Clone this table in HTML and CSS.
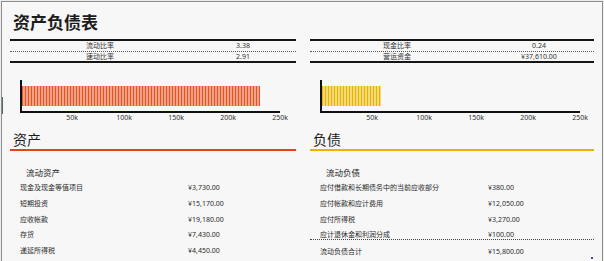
FILE: index.html
```html
<!DOCTYPE html>
<html lang="zh">
<head>
<meta charset="utf-8">
<title>资产负债表</title>
<link rel="stylesheet" href="styles.css">
</head>
<body>
<div class="sheet">
  <h1 class="title">资产负债表</h1>
  <div class="cols">
    <section class="col col-left">
      <div class="ratios ratios-left">
        <div class="ratio-row"><span>流动比率</span><span>3.38</span></div>
        <div class="ratio-row"><span>速动比率</span><span>2.91</span></div>
      </div>
      <div class="chart">
        <div class="plot"><div class="bar bar-assets" style="width:238px"></div></div>
        <div class="ticks"><span>50k</span><span>100k</span><span>150k</span><span>200k</span><span>250k</span></div>
      </div>
      <h2 class="section section-assets">资产</h2>
      <h3 class="group">流动资产</h3>
      <div class="rows">
        <div class="row"><span>现金及现金等值项目</span><span>¥3,730.00</span></div>
        <div class="row"><span>短期投资</span><span>¥15,170.00</span></div>
        <div class="row"><span>应收帐款</span><span>¥19,180.00</span></div>
        <div class="row"><span>存货</span><span>¥7,430.00</span></div>
        <div class="row"><span>递延所得税</span><span>¥4,450.00</span></div>
        <div class="row"><span>预付费用和其他流动资产</span><span>¥3,840.00</span></div>
      </div>
    </section>
    <section class="col col-right">
      <div class="ratios ratios-right">
        <div class="ratio-row"><span>现金比率</span><span>0.24</span></div>
        <div class="ratio-row"><span>营运资金</span><span>¥37,610.00</span></div>
      </div>
      <div class="chart">
        <div class="plot"><div class="bar bar-liab" style="width:59px"></div></div>
        <div class="ticks"><span>50k</span><span>100k</span><span>150k</span><span>200k</span><span>250k</span></div>
      </div>
      <h2 class="section section-liab">负债</h2>
      <h3 class="group">流动负债</h3>
      <div class="rows">
        <div class="row"><span>应付借款和长期债务中的当前应收部分</span><span>¥380.00</span></div>
        <div class="row"><span>应付帐款和应计费用</span><span>¥12,050.00</span></div>
        <div class="row"><span>应付所得税</span><span>¥3,270.00</span></div>
        <div class="row row-short"><span>应计退休金和利润分成</span><span>¥100.00</span></div>
        <div class="row row-total"><span>流动负债合计</span><span>¥15,800.00</span></div>
      </div>
      <span class="handle"></span>
    </section>
  </div>
</div>
</body>
</html>
```
FILE: styles.css
```css
* { box-sizing: border-box; }
html, body { margin: 0; padding: 0; background: #ececec; }
body {
  font-family: "Noto Sans", "Noto Sans CJK SC", sans-serif;
  color: #2a2a2a;
  width: 604px;
  height: 261px;
  overflow: hidden;
}
.sheet {
  margin: 1px 0 0 1px;
  width: 602px;
  height: 262px;
  border: 1px solid #8e8e8e;
  border-bottom: none;
  background: #f7f7f7;
  padding: 8px 8px 0 8px;
  overflow: hidden;
  position: relative;
}
.sheet::before {
  content: "";
  position: absolute;
  left: -1px;
  top: 95px;
  width: 2px;
  height: 17px;
  background: #4c6b58;
}
.title {
  margin: 0 0 0 3px;
  font-family: "Noto Sans CJK SC", sans-serif;
  font-weight: 700;
  font-size: 17px;
  line-height: 24px;
  height: 24px;
  color: #1c1c1c;
}
.cols {
  display: grid;
  grid-template-columns: 286px 284px;
  column-gap: 14px;
  margin-top: 5px;
}
.col { position: relative; }
.ratios {
  border-top: 2px solid #151515;
  border-bottom: 2px solid #151515;
  font-size: 7px;
  color: #333;
}
.ratio-row {
  display: grid;
  text-align: center;
  height: 10px;
  line-height: 10px;
}
.ratio-row + .ratio-row {
  border-top: 1px dotted #555;
  height: 10px;
  line-height: 9px;
}
.ratios-left .ratio-row { grid-template-columns: 180px 106px; }
.ratios-right .ratio-row { grid-template-columns: 174px 110px; }
.chart { margin-left: 10px; padding-top: 17px; }
.plot {
  width: 260px;
  height: 33px;
  border-left: 2px solid #111;
  border-bottom: 2px solid #111;
  padding-top: 6px;
}
.bar { height: 20px; }
.bar-assets {
  background: repeating-linear-gradient(90deg, #e4522a 0 1px, #f2a383 1px 3px);
}
.bar-liab {
  background: repeating-linear-gradient(90deg, #e6b400 0 1px, #f4d978 1px 3px);
}
.ticks {
  display: grid;
  grid-template-columns: repeat(5, 52px);
  width: 260px;
  font-size: 7px;
  line-height: 10px;
  color: #333;
}
.ticks span { justify-self: end; transform: translateX(50%); }
.section {
  margin: 7px 0 0 0;
  padding-left: 3px;
  font-family: "Noto Sans CJK SC", sans-serif;
  font-weight: 400;
  font-size: 14px;
  line-height: 19px;
  height: 21px;
  color: #1c1c1c;
}
.section-assets { border-bottom: 2px solid #e5421c; }
.section-liab { border-bottom: 2px solid #e8b400; }
.group {
  margin: 14px 0 0 16px;
  font-family: "Noto Sans CJK SC", sans-serif;
  font-weight: 400;
  font-size: 8.5px;
  line-height: 15px;
  color: #222;
}
.rows { font-size: 7px; color: #2a2a2a; }
.row {
  display: grid;
  grid-template-columns: 168px 1fr;
  padding-left: 10px;
  line-height: 15.75px;
  height: 15.75px;
}
.row-short { height: 11.5px; line-height: 15px; }
.row-total {
  border-top: 1px dotted #444;
  padding-top: 4px;
  height: 22px;
}
.handle {
  position: absolute;
  right: 1px;
  top: 218px;
  width: 2px;
  height: 2px;
  background: #3050c0;
}
```
